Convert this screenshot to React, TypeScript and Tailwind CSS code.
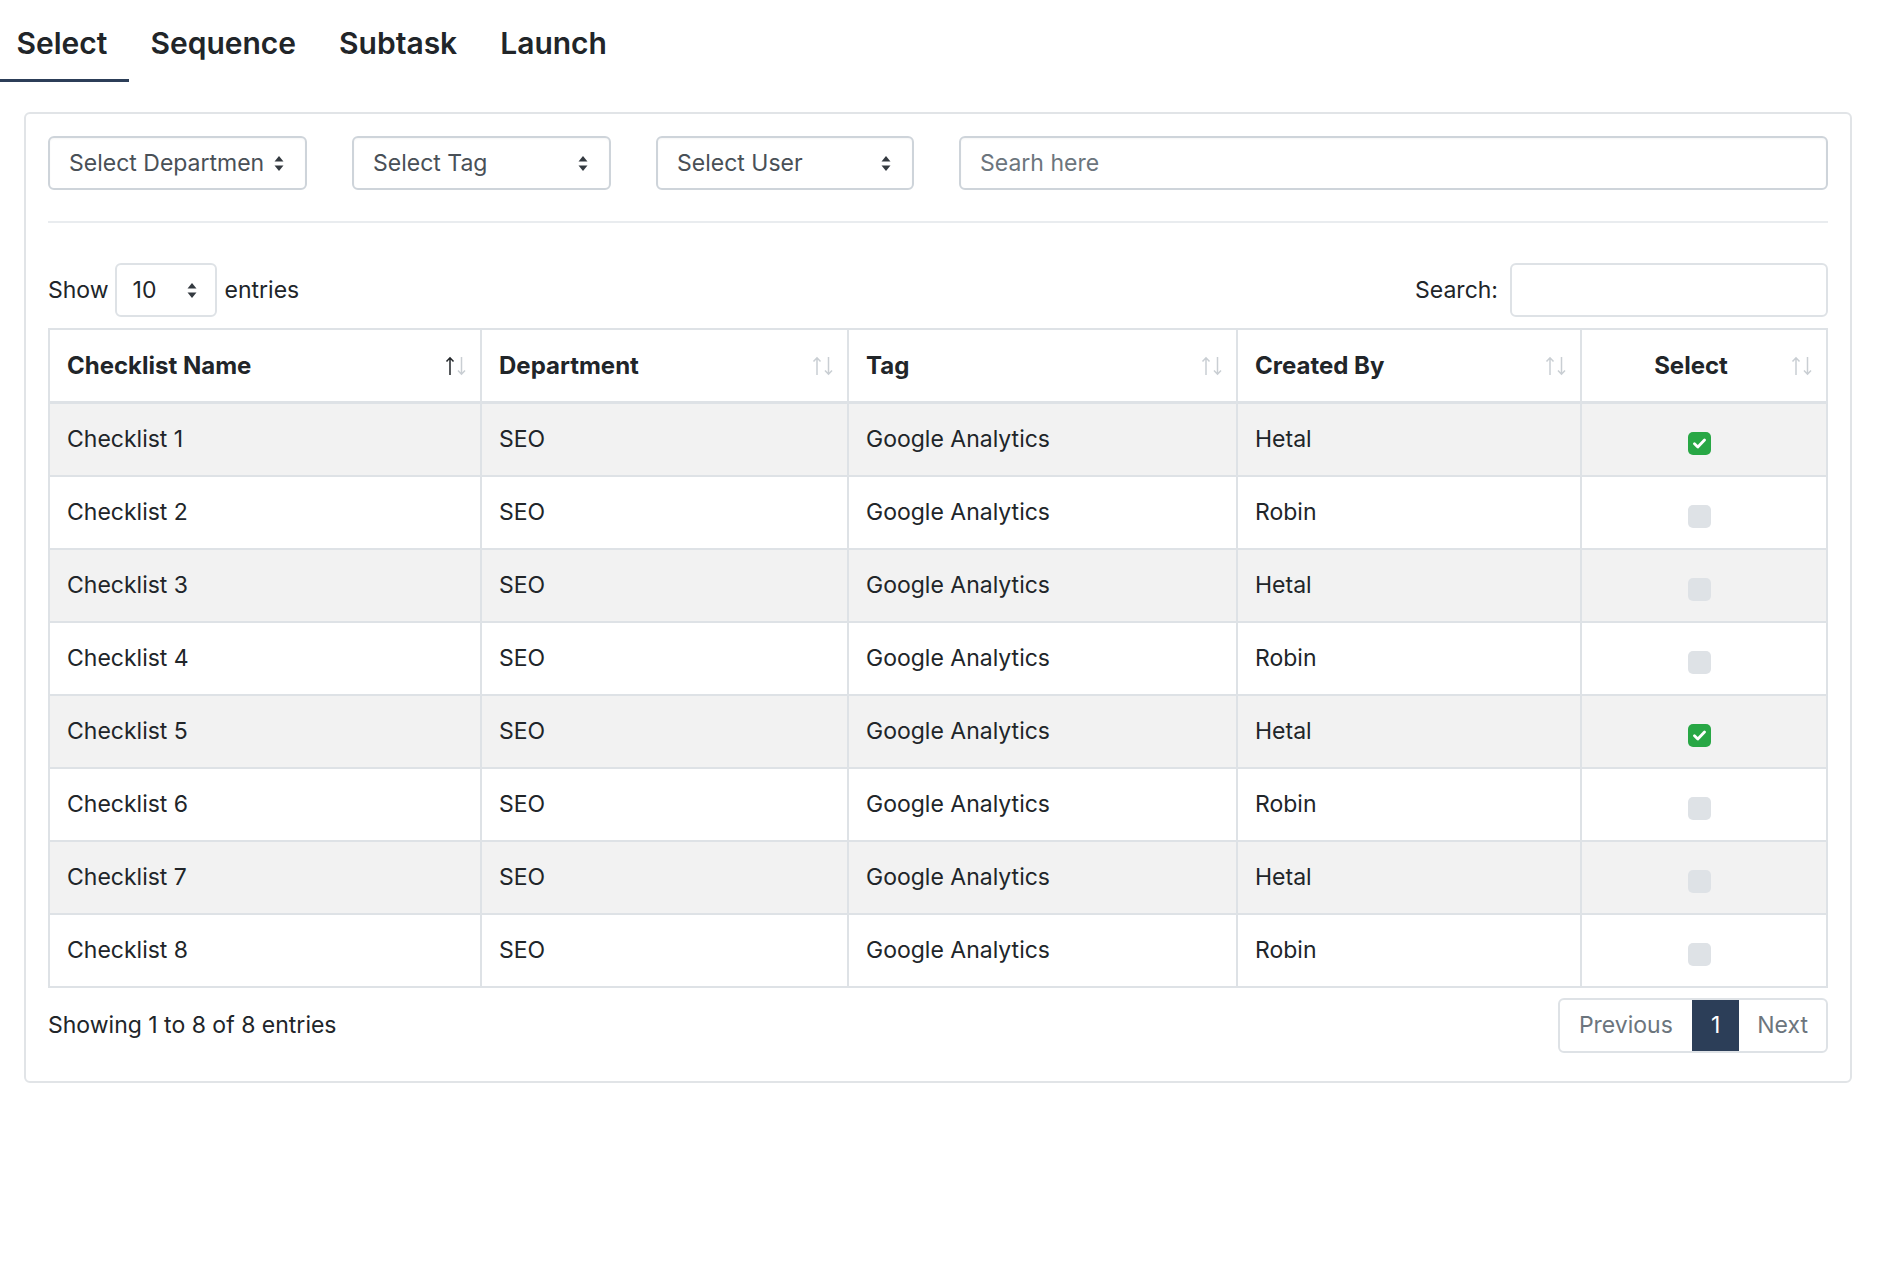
import React from 'react'

const rows = [
  { name: 'Checklist 1', dept: 'SEO', tag: 'Google Analytics', by: 'Hetal', checked: true },
  { name: 'Checklist 2', dept: 'SEO', tag: 'Google Analytics', by: 'Robin', checked: false },
  { name: 'Checklist 3', dept: 'SEO', tag: 'Google Analytics', by: 'Hetal', checked: false },
  { name: 'Checklist 4', dept: 'SEO', tag: 'Google Analytics', by: 'Robin', checked: false },
  { name: 'Checklist 5', dept: 'SEO', tag: 'Google Analytics', by: 'Hetal', checked: true },
  { name: 'Checklist 6', dept: 'SEO', tag: 'Google Analytics', by: 'Robin', checked: false },
  { name: 'Checklist 7', dept: 'SEO', tag: 'Google Analytics', by: 'Hetal', checked: false },
  { name: 'Checklist 8', dept: 'SEO', tag: 'Google Analytics', by: 'Robin', checked: false },
]

function Caret() {
  return (
    <svg width="10" height="17" viewBox="0 0 10 17" className="shrink-0">
      <path d="M5 1 L9.5 6.5 L0.5 6.5 Z" fill="#343a40" />
      <path d="M0.5 10.5 L9.5 10.5 L5 16 Z" fill="#343a40" />
    </svg>
  )
}

function SortArrows({ active = false }: { active?: boolean }) {
  const light = '#c9ced3'
  const up = active ? '#212529' : light
  return (
    <svg width="22" height="20" viewBox="0 0 22 20" className="absolute right-[13px] top-1/2 -translate-y-1/2">
      <path d="M5 19 V2 M1.5 5.5 L5 1.8 L8.5 5.5" stroke={up} strokeWidth="1.5" fill="none" />
      <path d="M16.5 1 V18 M13 14.5 L16.5 18.2 L20 14.5" stroke={light} strokeWidth="1.5" fill="none" />
    </svg>
  )
}

function Checkbox({ checked }: { checked: boolean }) {
  if (checked) {
    return (
      <span className="flex h-[23px] w-[23px] items-center justify-center rounded-[5px] bg-[#28a745]">
        <svg width="13" height="11" viewBox="0 0 13 11">
          <path d="M1.5 5.8 L4.8 9 L11.5 2" stroke="#fff" strokeWidth="2.8" fill="none" strokeLinecap="round" strokeLinejoin="round" />
        </svg>
      </span>
    )
  }
  return <span className="block h-[23px] w-[23px] rounded-[5px] bg-[#dee2e6]" />
}

function FakeSelect({ label, className, clip = false }: { label: string; className: string; clip?: boolean }) {
  return (
    <div className={`flex h-[54px] items-center rounded-[6px] border-2 border-[#ced4da] bg-white pl-[19px] pr-[21px] shadow-[inset_0_1px_2px_rgba(0,0,0,0.04)] ${className}`}>
      <span
        className={`overflow-hidden whitespace-nowrap text-[23px] text-[#495057] ${clip ? 'w-[194px] shrink-0' : 'min-w-0'}`}
      >
        {label}
      </span>
      <span className="flex-1" />
      <Caret />
    </div>
  )
}

export default function App() {
  const tabs = ['Select', 'Sequence', 'Subtask', 'Launch']

  return (
    <div className="min-h-screen bg-white font-['Inter',sans-serif] text-[#212529]">
      <nav className="-ml-[5px] flex">
        {tabs.map((t, i) => (
          <div
            key={t}
            className={`px-[21.5px] pb-[18px] pt-[25px] text-[30px] font-semibold leading-[36px] border-b-[3px] ${i === 0 ? 'border-[#2c3e58]' : 'border-transparent'}`}
          >
            {t}
          </div>
        ))}
      </nav>

      <div className="mx-[24px] mt-[30px] w-[1828px] rounded-[6px] border-2 border-[#e1e4e7] px-[22px] pb-[28px] pt-[22px]">
        <div className="flex items-center gap-[45px]">
          <FakeSelect label="Select Department" className="w-[259px]" clip />
          <FakeSelect label="Select Tag" className="w-[259px]" />
          <FakeSelect label="Select User" className="w-[258px]" />
          <div className="flex h-[54px] flex-1 items-center rounded-[6px] border-2 border-[#ced4da] pl-[19px] shadow-[inset_0_1px_2px_rgba(0,0,0,0.04)]">
            <span className="text-[23px] text-[#6c757d]">Searh here</span>
          </div>
        </div>

        <div className="mt-[31px] h-[2px] bg-[#e9ecef]" />

        <div className="mt-[40px] flex items-center justify-between text-[23px]">
          <div className="flex items-center">
            <span>Show</span>
            <div className="ml-[6px] flex h-[54px] w-[102px] items-center justify-between rounded-[6px] border-2 border-[#dee2e6] pl-[16px] pr-[18px]">
              <span className="text-[23px] text-[#212529]">10</span>
              <Caret />
            </div>
            <span className="ml-[8px]">entries</span>
          </div>
          <div className="flex items-center">
            <span>Search:</span>
            <div className="ml-[12px] h-[54px] w-[318px] rounded-[6px] border-2 border-[#dee2e6]" />
          </div>
        </div>

        <table className="mt-[11px] w-full table-fixed border-collapse text-[23px]">
          <colgroup>
            <col className="w-[432px]" />
            <col className="w-[367px]" />
            <col className="w-[389px]" />
            <col className="w-[344px]" />
            <col />
          </colgroup>
          <thead>
            <tr>
              {['Checklist Name', 'Department', 'Tag', 'Created By'].map((h, i) => (
                <th
                  key={h}
                  className="relative border-2 border-b-[3px] border-[#dee2e6] py-[17px] pl-[17px] pr-[40px] text-left text-[24px] font-bold leading-[37px]"
                >
                  {h}
                  <SortArrows active={i === 0} />
                </th>
              ))}
              <th className="relative border-2 border-b-[3px] border-[#dee2e6] py-[17px] pl-[18px] pr-[44px] text-center text-[24px] font-bold leading-[37px]">
                Select
                <SortArrows />
              </th>
            </tr>
          </thead>
          <tbody>
            {rows.map((r, i) => (
              <tr key={r.name} className={i % 2 === 0 ? 'bg-[#f2f2f2]' : 'bg-white'}>
                <td className="border-2 border-[#dee2e6] py-[17px] pl-[17px] leading-[37px]">{r.name}</td>
                <td className="border-2 border-[#dee2e6] py-[17px] pl-[17px] leading-[37px]">{r.dept}</td>
                <td className="border-2 border-[#dee2e6] py-[17px] pl-[17px] leading-[37px]">{r.tag}</td>
                <td className="border-2 border-[#dee2e6] py-[17px] pl-[17px] leading-[37px]">{r.by}</td>
                <td className="border-2 border-[#dee2e6] py-[17px] pl-[18px] pr-[28px] leading-[37px]">
                  <div className="flex h-[37px] justify-center pt-[11px]">
                    <Checkbox checked={r.checked} />
                  </div>
                </td>
              </tr>
            ))}
          </tbody>
        </table>

        <div className="mt-[10px] flex items-center justify-between">
          <span className="text-[23px]">Showing 1 to 8 of 8 entries</span>
          <div className="flex h-[55px] overflow-hidden rounded-[6px] border-2 border-[#dee2e6] text-[23px]">
            <span className="flex items-center px-[19px] text-[#6c757d]">Previous</span>
            <span className="flex items-center bg-[#2c3e58] px-[19px] text-white">1</span>
            <span className="flex items-center px-[18px] text-[#6c757d]">Next</span>
          </div>
        </div>
      </div>
    </div>
  )
}
